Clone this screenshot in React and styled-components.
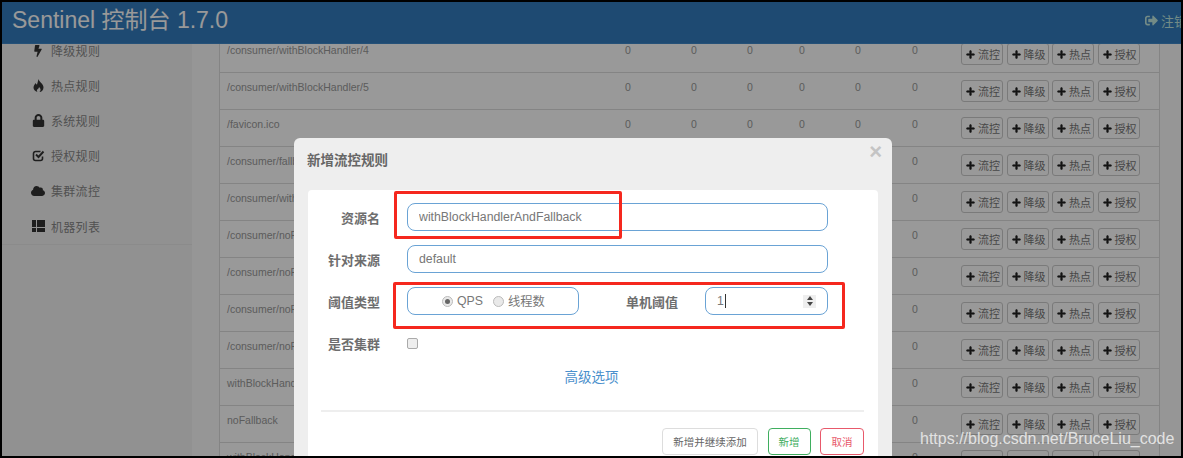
import React from 'react'
import styled, { createGlobalStyle } from 'styled-components'
import {
  FaBolt,
  FaLock,
  FaCloud,
  FaPlus,
  FaSignOutAlt,
} from 'react-icons/fa'

const FONT = `"Liberation Sans", "Noto Sans CJK SC", sans-serif`

const FlameIcon = () => (
  <svg width='13' height='13' viewBox='0 0 13 13' fill='currentColor'>
    <path d='M6.5 0C7 3 11.5 4.5 11.5 8.5C11.5 11 9.5 13 7.5 13C9 11.5 9 9.5 7 8C7 9.5 5.5 10 5 11C4.7 11.8 5 12.5 5.5 13C3 12.5 1.5 10.5 1.5 8.5C1.5 6.5 3 5.5 3.5 4C4 5 4.5 5.5 5 5.5C5.5 4 6 2 6.5 0Z' />
  </svg>
)

const CheckIcon = () => (
  <svg width='13' height='13' viewBox='0 0 13 13' fill='none' stroke='currentColor'>
    <path d='M10.5 7.5v2a2 2 0 0 1-2 2h-5a2 2 0 0 1-2-2v-5a2 2 0 0 1 2-2h5' strokeWidth='1.6' />
    <path d='M4 5.5l2.5 2.5 5-5.5' strokeWidth='1.9' />
  </svg>
)

const ListIcon = () => (
  <svg width='13' height='12' viewBox='0 0 13 12' fill='currentColor'>
    <rect x='0' y='0' width='4' height='7' />
    <rect x='5' y='0' width='8' height='7' />
    <rect x='0' y='8' width='4' height='4' />
    <rect x='5' y='8' width='8' height='4' />
  </svg>
)

const menu = [
  { icon: <FaBolt size={12} />, name: '降级规则' },
  { icon: <FlameIcon />, name: '热点规则' },
  { icon: <FaLock size={13} />, name: '系统规则' },
  { icon: <CheckIcon />, name: '授权规则' },
  { icon: <FaCloud size={14} />, name: '集群流控' },
  { icon: <ListIcon />, name: '机器列表' },
]

const resources = [
  '/consumer/withBlockHandler/4',
  '/consumer/withBlockHandler/5',
  '/favicon.ico',
  '/consumer/fallback/1',
  '/consumer/withBlockHandler/1',
  '/consumer/noFallback/1',
  '/consumer/noFallback/2',
  '/consumer/noFallback/3',
  '/consumer/noFallback/4',
  'withBlockHandlerAndFallback',
  'noFallback',
  'withBlockHandler',
]

const actions = ['流控', '降级', '热点', '授权']
const counts = [0, 1, 2, 3, 4, 5]

const App = () => {
  return (
    <>
      <GlobalStyle />
      <Frame>
        {/* TOP BAR */}
        <Navbar>
          <Brand>Sentinel 控制台 1.7.0</Brand>
          <Logout>
            <FaSignOutAlt size={13} />
            <span>注销</span>
          </Logout>
        </Navbar>

        <Body>
          <Sidebar>
            {menu.map(({ icon, name }) => (
              <MenuItem key={name}>
                <MenuIcon>{icon}</MenuIcon>
                <span>{name}</span>
              </MenuItem>
            ))}
          </Sidebar>

          <Main>
            <Table>
              {resources.map((name, i) => (
                <Row key={i}>
                  <NameCell>{name}</NameCell>
                  {counts.map((c) => <Cell key={c}>0</Cell>)}
                  <Actions>
                    {actions.map((a) => (
                      <ActionButton key={a}>
                        <FaPlus size={9} />
                        <span>{a}</span>
                      </ActionButton>
                    ))}
                  </Actions>
                </Row>
              ))}
            </Table>
          </Main>
        </Body>

        <Backdrop />

        {/* DIALOG */}
        <Modal>
          <ModalHeader>
            <ModalTitle>新增流控规则</ModalTitle>
            <Close>×</Close>
          </ModalHeader>
          <Card>
            <FormRow>
              <FieldLabel $width={72}>资源名</FieldLabel>
              <TextInput defaultValue='withBlockHandlerAndFallback' />
            </FormRow>
            <FormRow>
              <FieldLabel $width={72}>针对来源</FieldLabel>
              <TextInput defaultValue='default' />
            </FormRow>
            <FormRow>
              <FieldLabel $width={72}>阈值类型</FieldLabel>
              <RadioBox>
                <RadioDot $checked />
                <RadioText>QPS</RadioText>
                <RadioDot />
                <RadioText>线程数</RadioText>
              </RadioBox>
              <FieldLabel $width={54} $left={45}>单机阈值</FieldLabel>
              <NumberBox>
                <span>1</span>
                <Caret />
                <Spinner>
                  <SpinUp />
                  <SpinDown />
                </Spinner>
              </NumberBox>
            </FormRow>
            <FormRow>
              <FieldLabel $width={72}>是否集群</FieldLabel>
              <CheckBox />
            </FormRow>
            <AdvancedLink>高级选项</AdvancedLink>
            <Divider />
            <Footer>
              <FooterButton $width={96}>新增并继续添加</FooterButton>
              <FooterButton $width={43} $color='#3fae5f'>新增</FooterButton>
              <FooterButton $width={44} $color='#e8596b'>取消</FooterButton>
            </Footer>
          </Card>
        </Modal>

        {/* RED ANNOTATIONS DRAWN OVER THE SCREENSHOT */}
        <Annotation $x={392} $y={189} $w={228} $h={48} />
        <Annotation $x={391} $y={280} $w={452} $h={47} />

        <Watermark>https://blog.csdn.net/BruceLiu_code</Watermark>
      </Frame>
    </>
  )
}

const GlobalStyle = createGlobalStyle`
  html, body {
    margin: 0;
    padding: 0;
    background: #000;
  }
  * {
    box-sizing: border-box;
  }
`

const Frame = styled.div`
  position: relative;
  display: flex;
  flex-direction: column;
  width: 1183px;
  height: 458px;
  overflow: hidden;
  border: 2px solid #000;
  background: #fbfbfb;
  font-family: ${FONT};
  color: #333;
`

const Navbar = styled.header`
  flex: none;
  display: flex;
  justify-content: space-between;
  align-items: flex-start;
  height: 42px;
  padding: 3px 0 0 10px;
  background: #337cbe;
  border-bottom: 1px solid #3f88c8;
`

const Brand = styled.div`
  font-size: 23px;
  line-height: 30px;
  color: #fff;
`

const Logout = styled.div`
  display: flex;
  align-items: center;
  gap: 3px;
  width: 36px;
  height: 30px;
  overflow: hidden;
  white-space: nowrap;
  font-size: 13px;
  color: #c0e8e0;
  svg, span {
    flex: none;
  }
`

const Body = styled.div`
  flex: 1;
  display: flex;
  min-height: 0;
  overflow: hidden;
`

const Sidebar = styled.nav`
  flex: none;
  width: 190px;
  margin-top: -11px;
  background: #f2f2f2;
`

const MenuItem = styled.div`
  display: flex;
  align-items: center;
  height: 35px;
  padding-left: 29px;
  font-size: 12px;
  letter-spacing: 0.3px;
  color: #888;
  &:last-child {
    height: 37px;
    border-bottom: 1px solid #e8e8e8;
  }
`

const MenuIcon = styled.span`
  display: flex;
  justify-content: center;
  width: 14px;
  margin-right: 6px;
  color: #333;
`

const Main = styled.main`
  flex: 1;
  min-width: 0;
  padding: 0 21px 0 27px;
`

const Table = styled.div`
  margin-top: -8px;
  border-left: 1px solid #dcdcdc;
  border-right: 1px solid #dcdcdc;
  background: #fff;
`

const Row = styled.div`
  display: grid;
  grid-template-columns: 397px 66px 56px 52px 56px 57px 49px 1fr;
  height: 37px;
  padding-top: 7px;
  border-bottom: 1px solid #dcdcdc;
  font-size: 10.5px;
  line-height: 14px;
  color: #999;
`

const Cell = styled.div`
  padding-left: 8px;
`

const NameCell = styled(Cell)`
  overflow: hidden;
  white-space: nowrap;
  padding-left: 7px;
`

const Actions = styled.div`
  display: flex;
  gap: 3.5px;
  padding-left: 8px;
`

const ActionButton = styled.button`
  display: flex;
  align-items: center;
  gap: 3px;
  width: 42px;
  height: 22px;
  padding: 0 0 0 4px;
  border: 1px solid #ccc;
  border-radius: 3px;
  background: #fff;
  font-family: ${FONT};
  font-size: 11px;
  color: #777;
  white-space: nowrap;
  svg {
    flex: none;
    color: #222;
    stroke: currentColor;
    stroke-width: 30;
  }
`

const Backdrop = styled.div`
  position: absolute;
  inset: 0;
  background: rgba(0, 0, 0, 0.4);
`

const Modal = styled.section`
  position: absolute;
  left: 292px;
  top: 136px;
  width: 598px;
  padding: 0 14px 20px;
  border-radius: 6px;
  background: #eee;
`

const ModalHeader = styled.div`
  display: flex;
  justify-content: space-between;
  height: 52px;
  padding-top: 14px;
`

const ModalTitle = styled.div`
  font-size: 13.5px;
  line-height: 18px;
  font-weight: bold;
  color: #666;
  margin-left: -1px;
`

const Close = styled.div`
  margin: -13px -4px 0 0;
  font-size: 22px;
  line-height: 26px;
  font-weight: bold;
  color: #c4c4c4;
`

const Card = styled.div`
  padding: 13px 14px 40px 13px;
  border-radius: 4px;
  background: #fff;
`

const FormRow = styled.div`
  display: flex;
  align-items: center;
  height: 28px;
  margin-bottom: 14px;
  margin-left: -13px;
`

const FieldLabel = styled.label`
  flex: none;
  width: ${(p) => p.$width}px;
  margin-left: ${(p) => p.$left || 0}px;
  margin-right: 27px;
  text-align: right;
  font-size: 13px;
  font-weight: bold;
  color: #6e6e6e;
  white-space: nowrap;
`

const fieldBox = `
  height: 28px;
  border: 1px solid #6aa3d5;
  border-radius: 8px;
  background: #fff;
  font-family: ${FONT};
  font-size: 12.3px;
  color: #777;
`

const TextInput = styled.input`
  ${fieldBox}
  width: 421px;
  padding: 0 11px;
  outline: none;
`

const RadioBox = styled.div`
  ${fieldBox}
  display: flex;
  align-items: center;
  width: 172px;
  padding-left: 34px;
`

const RadioDot = styled.span`
  flex: none;
  position: relative;
  width: 11px;
  height: 11px;
  border: 1px solid #bbb;
  border-radius: 50%;
  background: #e9e9e9;
  &::after {
    content: '';
    display: ${(p) => (p.$checked ? 'block' : 'none')};
    position: absolute;
    left: 2px;
    top: 2px;
    width: 5px;
    height: 5px;
    border-radius: 50%;
    background: #666;
  }
`

const RadioText = styled.span`
  margin: 0 10px 0 4px;
  white-space: nowrap;
`

const NumberBox = styled.div`
  ${fieldBox}
  display: flex;
  align-items: center;
  width: 123px;
  padding: 0 11px;
`

const Caret = styled.span`
  width: 1px;
  height: 14px;
  margin-left: 1px;
  background: #333;
`

const Spinner = styled.span`
  display: flex;
  flex-direction: column;
  align-items: center;
  justify-content: center;
  gap: 2px;
  width: 13px;
  height: 13px;
  margin-left: auto;
  background: #eee;
`

const SpinUp = styled.span`
  border-left: 3.5px solid transparent;
  border-right: 3.5px solid transparent;
  border-bottom: 4px solid #444;
`

const SpinDown = styled.span`
  border-left: 3.5px solid transparent;
  border-right: 3.5px solid transparent;
  border-top: 4px solid #444;
`

const CheckBox = styled.span`
  width: 11px;
  height: 11px;
  border: 1px solid #aaa;
  border-radius: 2px;
  background: #eee;
`

const AdvancedLink = styled.div`
  margin-top: -2px;
  margin-right: 2px;
  text-align: center;
  font-size: 13.5px;
  line-height: 18px;
  color: #4a90cc;
`

const Divider = styled.div`
  height: 2px;
  margin-top: 23px;
  background: #eee;
`

const Footer = styled.div`
  display: flex;
  justify-content: flex-end;
  gap: 9.5px;
  margin-top: 16px;
`

const FooterButton = styled.button`
  width: ${(p) => p.$width}px;
  height: 27px;
  padding: 0;
  border: 1px solid ${(p) => p.$color || '#ddd'};
  border-radius: 4px;
  background: #fff;
  font-family: ${FONT};
  font-size: 10.5px;
  color: ${(p) => p.$color || '#666'};
  white-space: nowrap;
`

const Annotation = styled.div`
  position: absolute;
  left: ${(p) => p.$x}px;
  top: ${(p) => p.$y}px;
  width: ${(p) => p.$w}px;
  height: ${(p) => p.$h}px;
  border: 3px solid #f5281e;
  border-radius: 2px;
`

const Watermark = styled.div`
  position: absolute;
  left: 918px;
  top: 428px;
  font-size: 16px;
  line-height: 18px;
  color: #e2e2e2;
  white-space: nowrap;
`

export default App
